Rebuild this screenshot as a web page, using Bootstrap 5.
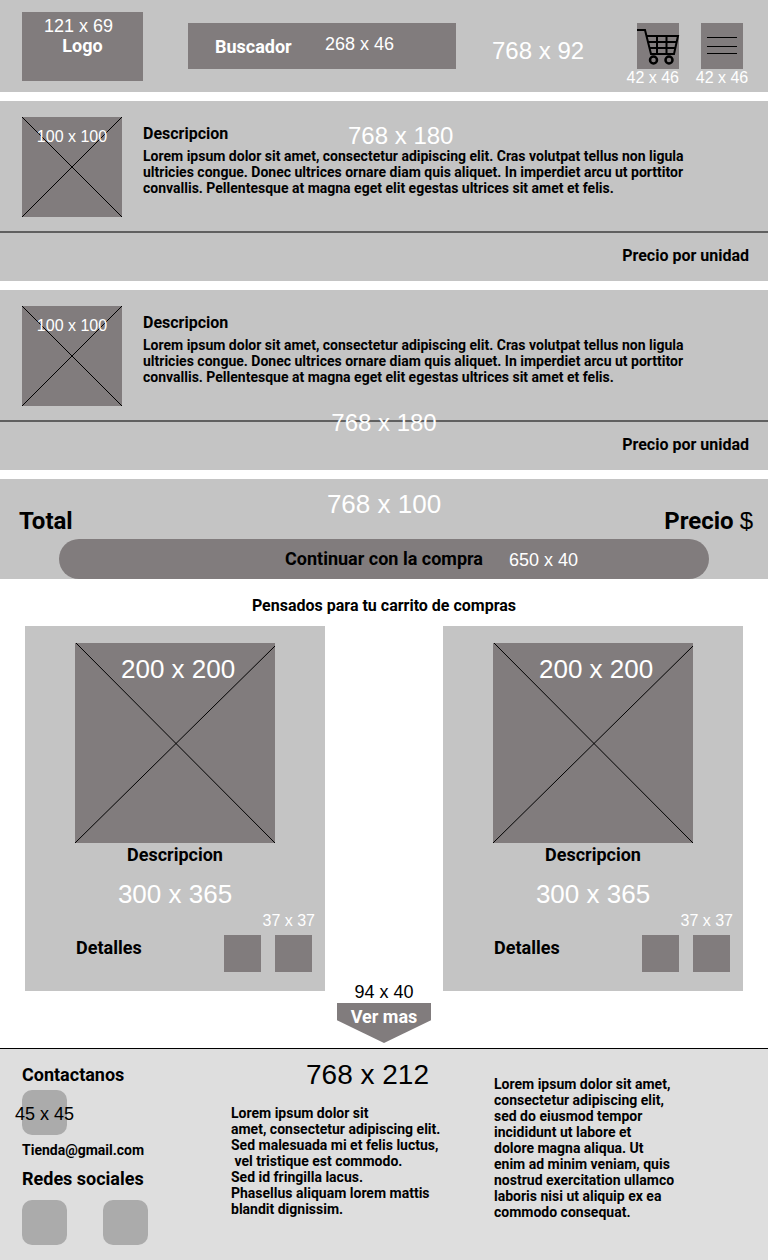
<!DOCTYPE html>
<html lang="es">
<head>
<meta charset="utf-8">
<meta name="viewport" content="width=device-width, initial-scale=1">
<title>Carrito de compras</title>
<link href="https://cdn.jsdelivr.net/npm/bootstrap@5.3.0/dist/css/bootstrap.min.css" rel="stylesheet">
<style>
  :root { --panel: #c4c4c4; --block: #817c7d; --soft: #ababab; --foot: #dedede; }
  body { font-family: Roboto, sans-serif; font-weight: 700; font-size: 14px; line-height: 16px; color: #000; background: #fff; }
  h1, h2, h3, p { margin: 0; font-weight: 700; color: #000; }
  .panel { background: var(--panel); }
  .block { background: var(--block); border: 0; border-radius: 0; padding: 0; }
  .size-note { font-family: "Liberation Sans", Arial, sans-serif; font-weight: 400; font-size: 16px; line-height: 20px; color: #fff; white-space: nowrap; }
  .note-18 { font-size: 18px; }
  .note-24 { font-size: 24px; line-height: 28px; }
  .note-26 { font-size: 26px; line-height: 32px; }
  .note-28 { font-size: 28px; line-height: 32px; }
  .t-16 { font-size: 16px; line-height: 20px; }
  .t-18 { font-size: 18px; line-height: 20px; }
  .t-24 { font-size: 24px; line-height: 28px; }
  .currency { font-family: "Liberation Sans", Arial, sans-serif; font-weight: 400; }

  .topbar { padding: 12px 25px 11px 22px; }
  .logo { width: 121px; height: 69px; padding-top: 4px; color: #fff; text-decoration: none; }
  .search { width: 268px; margin: 11px 36px 0 45px; }
  .search input { width: 100%; height: 46px; padding: 0 27px; color: #fff; font-size: 18px; font-weight: 700; }
  .search input::placeholder { color: #fff; opacity: 1; }
  .search .size-note { left: 137px; top: 11px; pointer-events: none; }
  .tools { gap: 22px; margin-top: 11px; }
  .tool { width: 42px; height: 46px; }
  .tool svg, .thumb svg { display: block; width: 100%; height: 100%; overflow: visible; }
  .tool .size-note { top: 45px; }

  .item { margin-top: 9px; }
  .item-body { padding: 16px 70px 14px 22px; gap: 21px; }
  .thumb { width: 100px; height: 100px; }
  .thumb .size-note { top: 10px; }
  .item-text { padding-top: 7px; }
  .item-text h2 { margin-bottom: 4px; }
  .item-price { border-top: 2px solid #606060; padding: 13px 19px 15px; }
  .item > .size-note { top: 21px; left: 348px; }
  .item > .note-low { top: 119px; left: 0; right: 0; }

  .total { margin-top: 9px; }
  .total-row { display: grid; grid-template-columns: 1fr auto 1fr; padding: 9px 15px 4px 15px; }
  .total-row h2 { padding-left: 4px; }
  .total-row .size-note { margin-bottom: 15px; }
  .buy { width: 650px; max-width: 100%; height: 40px; border-radius: 20px; color: #000; font-weight: 700; }
  .buy .size-note { left: calc(50% + 125px); top: 11px; }

  .related-title { padding: 17px 0 10px; }
  .related { padding: 0 25px; }
  .product { width: 300px; padding: 17px 0 19px; }
  .product .thumb { width: 200px; height: 200px; margin: 0 auto; }
  .product .thumb .size-note { top: 10px; left: 46px; }
  .product h3 { line-height: 24px; margin-bottom: 11px; }
  .pair-note { padding: 1px 10px 4px 0; }
  .product-foot { padding: 0 13px 0 51px; height: 37px; }
  .product-foot .t-18 { padding-top: 3px; }
  .squares { gap: 14px; }
  .square { width: 37px; height: 37px; }
  .more { margin: -9px 0 5px; }
  .more button { width: 94px; height: 40px; margin-top: 1px; padding-bottom: 12px; color: #fff; font-weight: 700; clip-path: polygon(0 0, 100% 0, 100% 43%, 50% 100%, 0 43%); }

  .site-foot { background: var(--foot); border-top: 1px solid #000; padding: 0 22px; display: grid; grid-template-columns: 209fr 263fr 252fr; }
  .foot-contact { padding: 16px 0 15px; }
  .social { display: block; width: 45px; height: 45px; border-radius: 10px; background: var(--soft); }
  .foot-contact .size-note { left: -7px; top: 14px; }
  .foot-contact > .social { margin: 5px 0; }
  .mail { color: #000; text-decoration: none; line-height: 20px; display: block; margin-bottom: 9px; }
  .social-row { gap: 36px; margin-top: 11px; }
  .foot-mid { padding-top: 10px; }
  .foot-mid .size-note { padding-left: 75px; margin-bottom: 14px; }
  .foot-end { padding-top: 27px; }
</style>
</head>
<body>

<header class="topbar panel d-flex align-items-start">
  <a href="#" class="logo block d-flex flex-column align-items-center">
    <span class="size-note note-18 me-2">121 x 69</span>
    <span class="t-18">Logo</span>
  </a>
  <form class="search position-relative">
    <input class="block d-block" type="search" placeholder="Buscador" aria-label="Buscador">
    <span class="size-note note-18 position-absolute">268 x 46</span>
  </form>
  <span class="size-note note-24 align-self-center pt-2">768 x 92</span>
  <div class="tools d-flex ms-auto">
    <button type="button" class="tool block position-relative" aria-label="Carrito">
      <svg viewBox="0 0 42 46" fill="none" stroke="#000" stroke-width="2">
        <path d="M0 7H8L14 31H37L41 13H9.500M11 19H39.500M12.500 25H38M20 13V31M29.500 13V31"/>
        <g stroke-width="2.500"><circle cx="16.500" cy="37" r="3.500"/><circle cx="32" cy="37" r="3.500"/></g>
      </svg>
      <span class="size-note position-absolute end-0">42 x 46</span>
    </button>
    <button type="button" class="tool block position-relative" aria-label="Menu">
      <svg viewBox="0 0 42 46" stroke="#000" stroke-width="1">
        <path d="M6 14.500H36M6 23.500H36M6 30.500H36"/>
      </svg>
      <span class="size-note position-absolute start-50 translate-middle-x">42 x 46</span>
    </button>
  </div>
</header>

<main>
  <article class="item panel position-relative">
    <div class="item-body d-flex">
      <div class="thumb block position-relative flex-shrink-0">
        <svg viewBox="0 0 100 100" stroke="#000"><path d="M0 0L100 100M0 100L100 0"/></svg>
        <span class="size-note position-absolute start-50 translate-middle-x">100 x 100</span>
      </div>
      <div class="item-text">
        <h2 class="t-16">Descripcion</h2>
        <p>Lorem ipsum dolor sit amet, consectetur adipiscing elit. Cras volutpat tellus non ligula ultricies congue. Donec ultrices ornare diam quis aliquet. In imperdiet arcu ut porttitor convallis. Pellentesque at magna eget elit egestas ultrices sit amet et felis.</p>
      </div>
    </div>
    <div class="item-price t-16 text-end">Precio por unidad</div>
    <span class="size-note note-24 position-absolute">768 x 180</span>
  </article>

  <article class="item panel position-relative">
    <div class="item-body d-flex">
      <div class="thumb block position-relative flex-shrink-0">
        <svg viewBox="0 0 100 100" stroke="#000"><path d="M0 0L100 100M0 100L100 0"/></svg>
        <span class="size-note position-absolute start-50 translate-middle-x">100 x 100</span>
      </div>
      <div class="item-text">
        <h2 class="t-16">Descripcion</h2>
        <p>Lorem ipsum dolor sit amet, consectetur adipiscing elit. Cras volutpat tellus non ligula ultricies congue. Donec ultrices ornare diam quis aliquet. In imperdiet arcu ut porttitor convallis. Pellentesque at magna eget elit egestas ultrices sit amet et felis.</p>
      </div>
    </div>
    <div class="item-price t-16 text-end">Precio por unidad</div>
    <span class="size-note note-24 note-low position-absolute text-center">768 x 180</span>
  </article>

  <section class="total panel">
    <div class="total-row align-items-end">
      <h2 class="t-24">Total</h2>
      <span class="size-note note-26">768 x 100</span>
      <span class="t-24 text-end">Precio <span class="currency">$</span></span>
    </div>
    <button type="button" class="buy block t-18 d-block mx-auto position-relative">Continuar con la compra
      <span class="size-note note-18 position-absolute">650 x 40</span>
    </button>
  </section>

  <h2 class="related-title t-16 text-center">Pensados para tu carrito de compras</h2>
  <section class="related d-flex flex-wrap justify-content-between">
    <article class="product panel">
      <div class="thumb block position-relative">
        <svg viewBox="0 0 200 200" stroke="#000"><path d="M1 0L200 200M0 200L200 3"/></svg>
        <span class="size-note note-26 position-absolute">200 x 200</span>
      </div>
      <h3 class="t-18 text-center">Descripcion</h3>
      <div class="size-note note-26 text-center">300 x 365</div>
      <div class="size-note pair-note text-end">37 x 37</div>
      <div class="product-foot d-flex align-items-start justify-content-between">
        <span class="t-18">Detalles</span>
        <div class="squares d-flex">
          <button type="button" class="square block" aria-label="Favorito"></button>
          <button type="button" class="square block" aria-label="Agregar"></button>
        </div>
      </div>
    </article>
    <article class="product panel">
      <div class="thumb block position-relative">
        <svg viewBox="0 0 200 200" stroke="#000"><path d="M1 0L200 200M0 200L200 3"/></svg>
        <span class="size-note note-26 position-absolute">200 x 200</span>
      </div>
      <h3 class="t-18 text-center">Descripcion</h3>
      <div class="size-note note-26 text-center">300 x 365</div>
      <div class="size-note pair-note text-end">37 x 37</div>
      <div class="product-foot d-flex align-items-start justify-content-between">
        <span class="t-18">Detalles</span>
        <div class="squares d-flex">
          <button type="button" class="square block" aria-label="Favorito"></button>
          <button type="button" class="square block" aria-label="Agregar"></button>
        </div>
      </div>
    </article>
  </section>
  <div class="more d-flex flex-column align-items-center">
    <span class="size-note note-18 text-black">94 x 40</span>
    <button type="button" class="block t-18">Ver mas</button>
  </div>
</main>

<footer class="site-foot">
  <div class="foot-contact">
    <h2 class="t-18">Contactanos</h2>
    <a href="#" class="social position-relative" aria-label="Contacto"><span class="size-note note-18 text-black position-absolute">45 x 45</span></a>
    <a href="mailto:Tienda@gmail.com" class="mail">Tienda@gmail.com</a>
    <h2 class="t-18">Redes sociales</h2>
    <div class="social-row d-flex">
      <a href="#" class="social" aria-label="Red social 1"></a>
      <a href="#" class="social" aria-label="Red social 2"></a>
    </div>
  </div>
  <div class="foot-mid">
    <div class="size-note note-28 text-black">768 x 212</div>
    <p>Lorem ipsum dolor sit<br>amet, consectetur adipiscing elit.<br>Sed malesuada mi et felis luctus,<br>&nbsp;vel tristique est commodo.<br>Sed id fringilla lacus.<br>Phasellus aliquam lorem mattis<br>blandit dignissim.</p>
  </div>
  <div class="foot-end">
    <p>Lorem ipsum dolor sit amet,<br>consectetur adipiscing elit,<br>sed do eiusmod tempor<br>incididunt ut labore et<br>dolore magna aliqua. Ut<br>enim ad minim veniam, quis<br>nostrud exercitation ullamco<br>laboris nisi ut aliquip ex ea<br>commodo consequat.</p>
  </div>
</footer>

<script src="https://cdn.jsdelivr.net/npm/bootstrap@5.3.0/dist/js/bootstrap.bundle.min.js"></script>
</body>
</html>
